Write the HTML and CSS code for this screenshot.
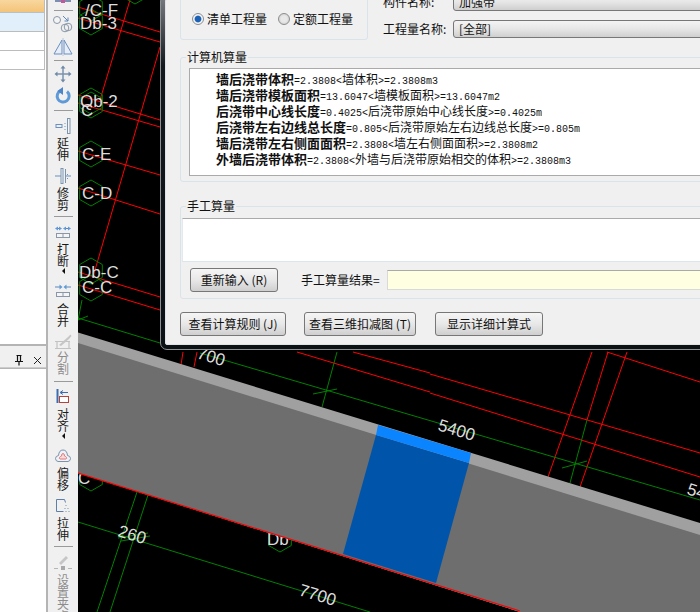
FILE: index.html
```html
<!DOCTYPE html>
<html lang="zh-CN">
<head>
<meta charset="utf-8">
<title>查看工程量计算式</title>
<link rel="stylesheet" href="styles.css">
</head>
<body>
<div class="app">
  <aside class="side">
    <div class="side-top">
      <div class="head"></div>
      <div class="row row-sel"></div>
      <div class="row"></div>
      <div class="row"></div>
    </div>
    <div class="side-gap"></div>
    <div class="side-title">
      <svg class="pin" width="10" height="11" viewBox="0 0 10 11"><path d="M2.500 .5h5M3.500 1v5M6.500 1v5M1 6.500h8M5 6.500v4" fill="none" stroke="#111" stroke-width="1.200"/></svg>
      <svg class="close" width="9" height="9" viewBox="0 0 9 9"><path d="M1 1l7 7M8 1L1 8" fill="none" stroke="#222"/></svg>
    </div>
    <div class="side-bottom"></div>
  </aside>

  <nav class="tools">
    <svg class="g0" width="22" height="3" viewBox="0 0 22 3"><path d="M3 1h6M13 1h6" stroke="#7d8fb0" stroke-width="2"/><rect x="9" y="0" width="4" height="3" fill="#c05a9a"/></svg>
    <div class="sep g7"></div>
    <svg class="g3" width="22" height="20" viewBox="0 0 22 20"><circle cx="5" cy="6" r="3.500" fill="#f4f4f4" stroke="#8a97a8"/><path d="M11 2l5 5M16 3.500V7h-3.500" fill="none" stroke="#5f86b8"/><circle cx="13" cy="14" r="3.800" fill="none" stroke="#8a97a8"/><circle cx="16" cy="13" r="3.800" fill="none" stroke="#8a97a8"/></svg>
    <svg class="g3" width="22" height="20" viewBox="0 0 22 20"><path d="M10 3v14H2zM12 3v14h8z" fill="#e8eef7" stroke="#6a8fc0"/><path d="M11 1v18" stroke="#b5c4dc"/></svg>
    <div class="sep g3"></div>
    <svg class="g4" width="18" height="18" viewBox="0 0 18 18"><path d="M9 2v14M2 9h14" stroke="#7b93ad" stroke-width="1.500"/><path d="M9 .5l2.500 3h-5zM9 17.500l2.500-3h-5zM.5 9l3-2.500v5zM17.500 9l-3-2.500v5z" fill="#6f8aa6"/></svg>
    <svg class="g4" width="18" height="18" viewBox="0 0 18 18"><path d="M7 3.500a6 6 0 1 0 6 1" fill="none" stroke="#5f9ad8" stroke-width="3"/><path d="M9 0v8L3.500 4z" fill="#4c86c8"/></svg>
    <div class="sep g5"></div>
    <svg class="g7" width="16" height="16" viewBox="0 0 16 16"><rect x="1" y="6.500" width="6" height="3" fill="none" stroke="#6a8fc0"/><path d="M10 5v1M10 8v1M10 11v1" stroke="#7b93ad"/><rect x="12.500" y=".5" width="2.500" height="15" fill="#f4f4f4" stroke="#7b93ad"/></svg>
    <div class="label g3">延伸</div>
    <svg class="g7" width="16" height="16" viewBox="0 0 16 16"><path d="M0 8h8M10 8h6M12.500 6v1M12.500 10v1" stroke="#6a8fc0"/><rect x="6" y=".5" width="2" height="15" fill="#f4f4f4" stroke="#7b93ad"/><path d="M10.500 1v14" stroke="#7b93ad"/></svg>
    <div class="label g3">修剪</div>
    <div class="sep g5"></div>
    <svg class="g9" width="16" height="12" viewBox="0 0 16 12"><path d="M6 2.500H1M9 2.500h6" stroke="#5f86b8"/><path d="M0 2.500l3-2v4zM7 2.500l-3-2v4zM8 2.500l3-2v4zM16 2.500l-3-2v4z" fill="#5f9ad8"/><rect x="1.500" y="7.500" width="13" height="4" fill="#f4f4f4" stroke="#8a97a8"/><path d="M8 7v5" stroke="#8a97a8"/></svg>
    <div class="label g5">打断</div>
    <div class="arrow g1"></div>
    <svg class="g10" width="16" height="13" viewBox="0 0 16 13"><path d="M0 3h6M10 3h6" stroke="#5f86b8"/><path d="M7.500 3l-3-2.500v5zM8.500 3l3-2.500v5z" fill="#5f9ad8"/><rect x="1.500" y="8.500" width="13" height="4" fill="#f4f4f4" stroke="#8a97a8"/><path d="M8 8v5" stroke="#8a97a8"/></svg>
    <div class="label g6">合并</div>
    <svg class="g7" width="18" height="15" viewBox="0 0 18 15"><path d="M1 7.500h15M1 14.500h16M3 7v8M15 7v8" stroke="#c2c2c2" stroke-width="1.200"/><path d="M5 11L14 3l2.500-2.500L17.500 2 15 5 7 12z" fill="#c6c6c6"/></svg>
    <div class="label off g2">分割</div>
    <div class="sep g6"></div>
    <svg class="g7" width="14" height="14" viewBox="0 0 14 14"><path d="M1.500 0v14" stroke="#3c6cb0" stroke-width="2"/><rect x="3.500" y="7.500" width="9" height="6" fill="#fff" stroke="#b5443c"/><path d="M12 3.500H5M7 1.500l-3 2 3 2" fill="none" stroke="#3c6cb0"/></svg>
    <div class="label g5">对齐</div>
    <div class="arrow g1"></div>
    <svg class="g10" width="16" height="13" viewBox="0 0 16 13"><path d="M3 12.500Q.5 12 .5 9.500t3-3q.5-5.500 4.500-5.500t4.500 5.500q3 .5 3 3t-2.500 3z" fill="#eef1f6" stroke="#7b93ad"/><path d="M5 10q-1-.5-.5-1.500T6.500 7Q6.500 4.500 8 4.500T9.500 7q1.500.5 2 1.500t-.5 1.500z" fill="#fbdada" stroke="#e07a7a"/></svg>
    <div class="label g5">偏移</div>
    <svg class="g8" width="14" height="13" viewBox="0 0 14 13"><path d="M.5 .5h8l1 3M.5 .5v12h7" fill="none" stroke="#5f7fa8"/><path d="M10 6v1M12 9v1M9 9v1M13 12v1M10 12v1" stroke="#7b93ad"/></svg>
    <div class="label g5">拉伸</div>
    <div class="sep g5"></div>
    <svg class="g8" width="20" height="15" viewBox="0 0 20 15"><path d="M6 8l7-7 2 2-7 7z" fill="#c6c6c6"/><path d="M1 13.500h4M15 13.500h4" stroke="#b5b5b5"/><rect x="8" y="11" width="4" height="4" fill="#a8a8a8"/></svg>
    <div class="label off g4">设置夹点</div>
  </nav>

  <main class="canvas">
    <svg class="cad" width="622" height="612" viewBox="78 0 622 612">
      <defs>
        <polygon id="hex" points="0,-13 11.300,-6.500 11.300,6.500 0,13 -11.300,6.500 -11.300,-6.500"/>
      </defs>
      <g class="red">
        <path d="M78 7L160 32M78 18L160 42M130 0L100 100M160 47L93 277M78 95L160 120M78 103L160 127M78 151L160 175M78 188L160 214M78 272L160 297M78 285L160 310"/>
        <path d="M183 352L181 365M197 352L194 367M297 352L430 392M353 352L430 373M430 374L700 453M430 393L700 477M607 352L700 382M592 352L548 477M608 352L587 420M627 352L580 487"/>
      </g>
      <g class="green">
        <use href="#hex" x="135" y="-9"/><use href="#hex" x="91" y="8"/><use href="#hex" x="91" y="22"/>
        <use href="#hex" x="91" y="101"/><use href="#hex" x="91" y="105"/><use href="#hex" x="91" y="154"/>
        <use href="#hex" x="91" y="193"/><use href="#hex" x="91" y="271"/><use href="#hex" x="91" y="288"/>
        <use href="#hex" x="91" y="478"/><use href="#hex" x="280" y="539"/>
        <path d="M78 318L160 343M78 320L88 316M82 300L78 320"/>
        <path d="M200 353L700 500M337 352L322 407M313 394L337 389M587 420L570 483M562 468L587 461"/>
        <path d="M78 522L370 612M137 492L97 612M148 495L110 612M118 538L148 533M121 541L150 536"/>
      </g>
      <g class="lbl">
        <text x="85" y="16">/C-F</text><text x="80" y="29">Db-3</text>
        <text x="80" y="107">Qb-2</text><text x="81" y="116">C</text>
        <text x="82" y="160">C-E</text><text x="82" y="199">C-D</text>
        <text x="79" y="278">Db-C</text><text x="82" y="293">C-C</text>
        <text x="78" y="484">C</text><text x="267" y="545">Db</text>
      </g>
      <path class="strip" d="M78 332.500L700 523V612H520L78 473Z"/>
      <path class="wall" d="M78 343L700 535V612H520L78 473Z"/>
      <path class="blue-dark" d="M376 435L469 463L436 583L343 554Z"/>
      <path class="blue-light" d="M378 425L471 453L469 463L376 435Z"/>
      <path class="edge" d="M78 473L520 611"/>
      <g class="lbl">
        <text transform="rotate(17 437 430)" x="437" y="430">5400</text>
        <text transform="rotate(17 686 494)" x="686" y="494">54</text>
        <text transform="rotate(17 298 595)" x="298" y="595">7700</text>
        <text transform="rotate(17 117 536)" x="117" y="536">260</text>
        <text transform="rotate(17 196 358)" x="196" y="358">700</text>
      </g>
    </svg>

    <section class="dialog">
      <div class="dialog-body">
        <div class="top">
          <div class="mode">
            <label class="choice"><span class="radio on"></span>清单工程量</label>
            <label class="choice"><span class="radio"></span>定额工程量</label>
          </div>
          <div class="filters">
            <div class="filter"><span class="filter-name">构件名称:</span><div class="select">加强带</div></div>
            <div class="filter"><span class="filter-name">工程量名称:</span><div class="select">[全部]</div></div>
          </div>
        </div>

        <fieldset class="group auto">
          <legend>计算机算量</legend>
          <div class="result">
            <p><b>墙后浇带体积</b><i>=2.3808&lt;</i>墙体积<i>&gt;=2.3808m3</i></p>
            <p><b>墙后浇带模板面积</b><i>=13.6047&lt;</i>墙模板面积<i>&gt;=13.6047m2</i></p>
            <p><b>后浇带中心线长度</b><i>=0.4025&lt;</i>后浇带原始中心线长度<i>&gt;=0.4025m</i></p>
            <p><b>后浇带左右边线总长度</b><i>=0.805&lt;</i>后浇带原始左右边线总长度<i>&gt;=0.805m</i></p>
            <p><b>墙后浇带左右侧面面积</b><i>=2.3808&lt;</i>墙左右侧面面积<i>&gt;=2.3808m2</i></p>
            <p><b>外墙后浇带体积</b><i>=2.3808&lt;</i>外墙与后浇带原始相交的体积<i>&gt;=2.3808m3</i></p>
          </div>
        </fieldset>

        <fieldset class="group manual">
          <legend>手工算量</legend>
          <div class="entry"></div>
          <div class="manual-row">
            <button class="btn btn-reset" type="button">重新输入 (R)</button>
            <span class="manual-name">手工算量结果=</span>
            <div class="manual-value"></div>
          </div>
        </fieldset>

        <div class="actions">
          <button class="btn btn-rule" type="button">查看计算规则 (J)</button>
          <button class="btn btn-3d" type="button">查看三维扣减图 (T)</button>
          <button class="btn btn-detail" type="button">显示详细计算式</button>
        </div>
      </div>
    </section>
  </main>
</div>
</body>
</html>
```
FILE: styles.css
```css
* { box-sizing: border-box; }
html, body { margin: 0; height: 100%; overflow: hidden; }
body { font: 12px/14px "Noto Sans CJK SC", "Liberation Sans", sans-serif; color: #111; background: #f0f0f0; }
.app { display: flex; width: 700px; height: 612px; overflow: hidden; }

/* left dock */
.side { width: 46px; flex: none; display: flex; flex-direction: column; background: #fff; }
.side-top { height: 346px; flex: none; border-bottom: 2px solid #b4b4b4; }
.head { height: 13px; width: 45px; background: linear-gradient(#f8d79e, #f4c477); border-bottom: 1px solid #b5c0ca; border-right: 1px solid #bbb; }
.row { height: 19px; width: 45px; border-bottom: 1px solid #bcbcbc; border-right: 1px solid #bcbcbc; }
.row-sel { height: 19px; background: #e1effb; }
.side-gap { height: 7px; flex: none; background: #f0f0f0; }
.side-title { height: 15px; flex: none; background: #f0f0f0; border-bottom: 1px solid #ccc; display: flex; align-items: center; justify-content: flex-end; gap: 9px; padding-right: 4px; }
.side-bottom { flex: 1; border-top: 1px solid #b4b4b4; }

/* vertical toolbar */
.tools { width: 32px; flex: none; border-left: 2px solid #b4b4b4; background: #f0f0f0; display: flex; flex-direction: column; align-items: center; overflow: hidden; }
.tools svg { flex: none; display: block; }
.sep { width: 19px; height: 1px; flex: none; background: #9a9a9a; }
.label { width: 12px; flex: none; font-size: 12px; line-height: 12px; color: #1a1a1a; }
.label.off { color: #8c8c8c; }
.arrow { width: 0; height: 0; flex: none; border: 3px solid transparent; border-right-color: #111; border-left-width: 0; }
.g0 { margin-top: 0; } .g1 { margin-top: 1px; } .g2 { margin-top: 2px; } .g3 { margin-top: 3px; }
.g4 { margin-top: 4px; } .g5 { margin-top: 5px; } .g6 { margin-top: 6px; } .g7 { margin-top: 7px; }
.g8 { margin-top: 8px; } .g9 { margin-top: 9px; } .g10 { margin-top: 10px; }

/* drawing */
.canvas { position: relative; flex: 1; background: #000; overflow: hidden; }
.cad { position: absolute; left: 0; top: 0; display: block; }
.red path { fill: none; stroke: #f00; stroke-width: 1; }
.green use, .green path { fill: none; stroke: #008000; stroke-width: 1; }
.lbl text { font: 17px "Liberation Sans", sans-serif; fill: #ddd; }
.strip { fill: #a0a0a0; }
.wall { fill: #6e6e6e; }
.edge { fill: none; stroke: #f00; stroke-width: 1.200; }
.blue-dark { fill: #0055aa; }
.blue-light { fill: #0a84ff; }

/* dialog */
.dialog { position: absolute; left: 82px; top: -6px; right: -60px; height: 356px; padding: 4px; border: 1px solid #8b9194; border-radius: 7px; background: linear-gradient(#7c7f82, #14191b 20%, #0c1214); }
.dialog-body { height: 100%; padding: 0 0 0 14px; background: #f0f0f0; border: 1px solid #dfe3e5; border-radius: 2px; }
.top { display: flex; height: 40px; }
.mode { width: 188px; height: 50px; margin-top: -10px; flex: none; padding: 0 11px 13px; display: flex; align-items: flex-end; gap: 11px; border: 1px solid #d9e3ea; border-radius: 3px; }
.choice { display: flex; align-items: center; gap: 3px; white-space: nowrap; }
.radio { width: 12px; height: 12px; flex: none; border-radius: 50%; border: 1px solid #8d8d8d; background: radial-gradient(circle, #e8e8e8 0 40%, #c4c4c4 100%); }
.radio.on { background: radial-gradient(circle, #1c62b4 0 40%, #f2f6fa 55% 100%); }
.filters { margin: -7px 0 0 15px; display: flex; flex-direction: column; gap: 9px; flex: 1; }
.filter { display: flex; align-items: center; height: 18px; }
.filter-name { width: 70px; flex: none; white-space: nowrap; }
.select { flex: 1; height: 18px; padding-left: 5px; line-height: 16px; border: 1px solid #777; border-radius: 3px; background: linear-gradient(#f4f4f4, #e6e6e6 50%, #cfcfcf); }
.group { margin: 0; padding: 0; min-width: 0; border: 1px solid #d9e3ea; border-radius: 3px; }
.group legend { padding: 0 1px; font-size: 12px; line-height: 14px; }
.auto { height: 132px; margin-top: 10px; padding: 4px 0 5px 8px; }
.auto legend { margin-left: -3px; }
.result { height: 108px; padding: 2px 0 0 26px; background: #fff; border: 1px solid #aaa; }
.result p { margin: 0; height: 16px; line-height: 16px; white-space: nowrap; font-size: 12px; }
.result b { font-size: 13px; font-weight: 700; }
.result i { font: 10px/16px "Liberation Mono", monospace; }
.manual { height: 100px; margin-top: 17px; padding: 5px 0 0 1px; }
.manual legend { margin-left: 4px; }
.entry { height: 44px; background: #fff; border-top: 1px solid #aaa; border-left: 1px solid #e3e9ee; border-bottom: 1px solid #dbe5ec; }
.manual-row { display: flex; align-items: center; margin: 6px 0 0 8px; height: 24px; }
.manual-name { margin-left: 23px; width: 86px; flex: none; white-space: nowrap; }
.manual-value { flex: 1; height: 20px; background: #ffffe1; border: 1px solid #d9d9d9; border-top-color: #aaa; }
.btn { height: 24px; padding: 0; flex: none; font: 12px/14px "Noto Sans CJK SC", sans-serif; color: #111; border: 1px solid #777; border-radius: 3px; background: linear-gradient(#f5f5f5, #e8e8e8 50%, #cfcfcf); }
.btn-reset { width: 88px; }
.actions { display: flex; margin-top: 13px; }
.btn-rule { width: 106px; }
.btn-3d { width: 112px; margin-left: 18px; }
.btn-detail { width: 108px; margin-left: 19px; }
```
